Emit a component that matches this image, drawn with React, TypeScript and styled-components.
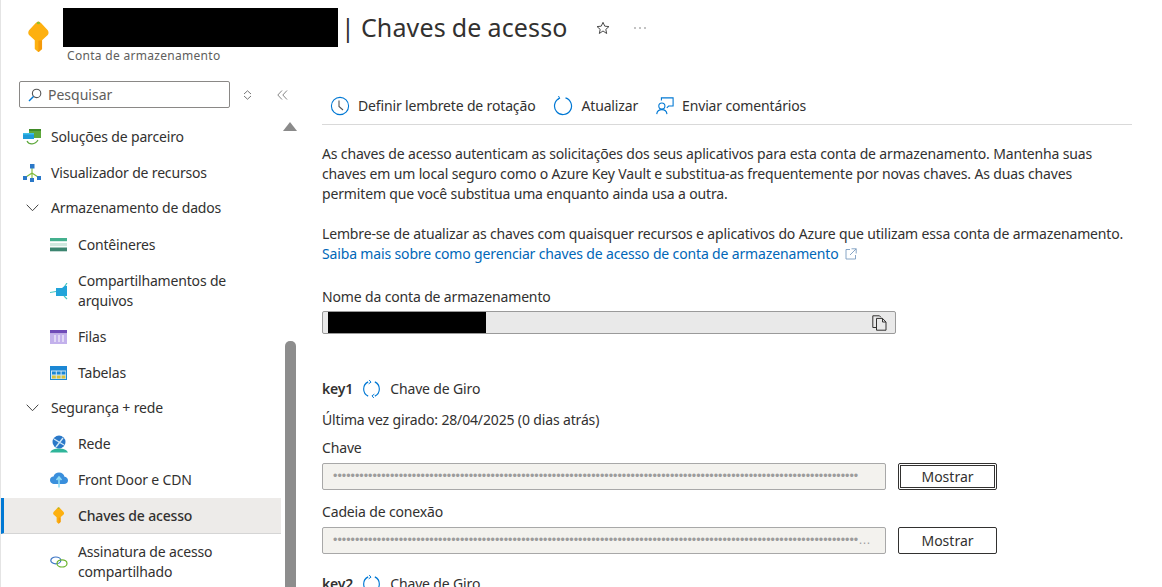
import React from "react";
import styled, { createGlobalStyle } from "styled-components";

const Global = createGlobalStyle`
  html, body { margin: 0; padding: 0; background: #fff; }
  body { font-family: "Noto Sans", "Open Sans", "Liberation Sans", sans-serif; color: #323130; }
  * { box-sizing: border-box; }
`;

const Page = styled.div`
  width: 1162px; height: 587px; overflow: hidden; display: flex; flex-direction: column;
  border-left: 1px solid #e4e4e4; position: relative;
`;
const Header = styled.header`
  height: 81px; display: flex; flex: none;
`;
const HeaderIcon = styled.div`
  width: 62px; padding: 21px 0 0 27px; flex: none;
`;
const TitleBlock = styled.div`
  padding-top: 8px; display: flex; flex-direction: column;
`;
const TitleRow = styled.div`
  display: flex; align-items: center; height: 39px;
`;
const Redacted = styled.div<{ $w: number; $h: number }>`
  width: ${p => p.$w}px; height: ${p => p.$h}px; background: #000; flex: none;
`;
const Title = styled.h1`
  margin: 0 0 2px 3px; font-size: 25px; font-weight: 400; letter-spacing: 0.15px; word-spacing: -0.7px; white-space: nowrap; color: #323130;
`;
const TitleActions = styled.div`
  display: flex; align-items: center; gap: 23px; margin-left: 28px; color: #555;
`;
const Subtitle = styled.div`
  font-size: 12px; color: #605e5c; margin: 0 0 0 4px; letter-spacing: 0.3px;
`;
const Body = styled.div`
  flex: 1; display: flex; min-height: 0;
`;
const Sidebar = styled.aside`
  width: 321px; flex: none; display: flex; flex-direction: column; position: relative; overflow: hidden;
`;
const SearchRow = styled.div`
  display: flex; align-items: center; padding-left: 18px; height: 27px; flex: none;
`;
const SearchBox = styled.div`
  width: 211px; height: 27px; border: 1px solid #8a8886; border-radius: 2px; display: flex; align-items: center;
  padding-left: 8px; gap: 6px; font-size: 14px; color: #605e5c;
`;
const SearchTools = styled.div`
  display: flex; align-items: center; gap: 25px; margin-left: 13px; color: #777;
`;
const Nav = styled.nav`
  width: 280px; margin-top: 11px; display: flex; flex-direction: column;
`;
const NavItem = styled.div<{ $level: number; $selected?: boolean; $tall?: boolean; $short?: boolean }>`
  display: flex; align-items: center; flex: none; height: ${p => (p.$tall ? 56 : p.$short ? 35 : 36)}px;
  padding-left: ${p => (p.$level === 2 ? 49 : 22)}px;
  font-size: 14px; line-height: 20px; letter-spacing: -0.17px; color: #323130;
  background: ${p => (p.$selected ? "#edebe9" : "transparent")};
  border-left: ${p => (p.$selected ? "3px solid #0078d4" : "0 solid transparent")};
  ${p => p.$level === 1 && "padding-bottom: 2px;"}
  ${p => p.$selected && "padding-left: 46px; font-weight: 500; border-bottom: 1px solid #d5d5d5;"}
`;
const NavIcon = styled.span`
  width: 18px; height: 18px; flex: none; margin-right: 10px; display: flex; align-items: center; justify-content: center;
`;
const Chevron = styled.span`
  width: 18px; flex: none; margin-right: 10px; display: flex; justify-content: center;
`;
const ScrollThumb = styled.div`
  position: absolute; left: 284px; top: 260px; width: 11px; height: 260px; border-radius: 5px 5px 0 0; background: #8d8d8d;
`;
const ScrollArrow = styled.div`
  position: absolute; left: 282px; top: 41px; width: 0; height: 0;
  border-left: 7px solid transparent; border-right: 7px solid transparent; border-bottom: 9px solid #8a8a8a;
`;
const Main = styled.main`
  width: 810px; flex: none; display: flex; flex-direction: column; font-size: 14px; line-height: 20px; letter-spacing: -0.15px;
`;
const Toolbar = styled.div`
  height: 44px; flex: none; display: flex; align-items: center; padding: 6px 0 0 8px; gap: 18px; border-bottom: 1px solid #d9d9d9;
`;
const ToolButton = styled.div`
  display: flex; align-items: center; gap: 8px; white-space: nowrap; color: #323130;
`;
const Paragraph = styled.p<{ $top: number }>`
  margin: ${p => p.$top}px 0 0; width: 810px; color: #323130;
`;
const Link = styled.a`
  color: #0067b8; text-decoration: none; display: inline-flex; align-items: center; gap: 6px;
`;
const FieldLabel = styled.div`
  color: #323130; height: 20px;
`;
const AccountLabel = styled(FieldLabel)`
  margin-top: 23px;
`;
const AccountBox = styled.div`
  width: 574px; height: 28px; margin-top: 4px; background: #e9e9e9; border: 1px solid #9a9a9a; border-radius: 2px;
  display: flex; align-items: center; justify-content: space-between; padding: 0 8px 0 5px;
`;
const KeyHead = styled.div<{ $top: number }>`
  display: flex; align-items: center; height: 20px; margin-top: ${p => p.$top}px; gap: 9px; white-space: nowrap;
  & > b { font-weight: 600; }
`;
const Rotated = styled.div`
  margin-top: 11px; height: 20px;
`;
const Label = styled(FieldLabel)<{ $top: number }>`
  margin-top: ${p => p.$top}px;
`;
const SecretRow = styled.div`
  display: flex; align-items: center; gap: 12px; margin-top: 5px;
`;
const SecretBox = styled.div`
  width: 564px; height: 27px; background: #f3f2ee; border: 1px solid #a8a8a8; border-radius: 2px; padding: 0 11px 0 10px;
  line-height: 25px;
  font-family: "Liberation Sans", sans-serif; font-size: 12.5px; letter-spacing: 0; color: #9c9c9c;
  overflow: hidden; white-space: nowrap; text-overflow: ellipsis;
`;
const ShowButton = styled.button<{ $focus?: boolean }>`
  width: 99px; height: 27px; background: #fff; border: 1px solid #323130; border-radius: 2px;
  font: inherit; font-size: 14px; letter-spacing: 0; color: #323130; padding: 0;
  ${p => p.$focus && "outline: 1px solid #323130; outline-offset: -3px;"}
`;

const KeyIcon = ({ size = 26 }: { size?: number }) => (
  <svg width={size * 0.8} height={size * 1.2} viewBox="0 0 20 30">
    <path d="M10 .5 C11 .5 12 1.5 13 2.5 L19 9 C20 10.5 20 12 19 13.5 L13.5 18.5 V27 L10 30 L6.5 27 V18.5 L1 13.5 C0 12 0 10.5 1 9 L7 2.5 C8 1.5 9 .5 10 .5 Z" fill="#fdb010" />
    <ellipse cx="10" cy="2" rx="1.6" ry="1.2" fill="#8fbf30" />
    <path d="M13.5 18.5 V27 L10 30 V19 Z" fill="#f59a0a" />
  </svg>
);
const Star = () => (
  <svg width="14" height="14" viewBox="0 0 16 16" fill="none" stroke="#444" strokeWidth="1.1"><path d="M8 1.5l2 4.4 4.8.5-3.6 3.2 1 4.7L8 11.4l-4.2 2.9 1-4.7L1.2 6.4 6 5.9z" /></svg>
);
const More = () => (
  <svg width="14" height="4" viewBox="0 0 14 4" fill="#777"><circle cx="2" cy="2" r=".8" /><circle cx="7" cy="2" r=".8" /><circle cx="12" cy="2" r=".8" /></svg>
);
const SearchIcon = () => (
  <svg width="14" height="14" viewBox="0 0 14 14" fill="none" strokeWidth="1.1"><circle cx="8.6" cy="5.4" r="4.2" stroke="#555" /><path d="M5.5 8.5 L1 13" stroke="#0078d4" strokeWidth="1.4" /></svg>
);
const Updown = () => (
  <svg width="9" height="10" viewBox="0 0 9 10" fill="none" stroke="#666" strokeWidth=".9"><path d="M1 4 L4.5 .8 L8 4" /><path d="M1 6 L4.5 9.2 L8 6" /></svg>
);
const Collapse = () => (
  <svg width="11" height="10" viewBox="0 0 11 10" fill="none" stroke="#777" strokeWidth=".9"><path d="M5 .5 L.8 5 L5 9.5" /><path d="M10 .5 L5.8 5 L10 9.5" /></svg>
);
const ChevronDown = () => (
  <svg width="13" height="8" viewBox="0 0 13 8" fill="none" stroke="#444" strokeWidth="1"><path d="M.7 .7 L6.5 6.7 L12.3 .7" /></svg>
);
const Partner = () => (
  <svg width="18" height="17" viewBox="0 0 18 17">
    <rect x="6" y="0" width="12" height="9" fill="#5ea83b" /><rect x="6" y="0" width="12" height="2" fill="#3f8a27" />
    <rect x="0" y="4" width="11" height="6" fill="#1f9bd8" /><rect x="0" y="4" width="11" height="1.5" fill="#3fc0e8" />
    <path d="M4 12 C6 16 12 16 15 11" stroke="#5ea83b" strokeWidth="1.2" fill="none" />
  </svg>
);
const Explorer = () => (
  <svg width="18" height="18" viewBox="0 0 18 18">
    <path d="M9 4 V9 M9 9 L3 13 M9 9 L15 13 M9 9 V15" stroke="#7fba3a" strokeWidth="1.1" fill="none" />
    <rect x="7" y="0" width="4.5" height="4.5" fill="#2a78c8" /><rect x="0" y="12" width="4" height="4" fill="#2a78c8" />
    <rect x="14" y="12" width="4" height="4" fill="#2a78c8" /><rect x="7" y="14" width="4" height="4" fill="#2a78c8" />
  </svg>
);
const Containers = () => (
  <svg width="18" height="14" viewBox="0 0 18 14">
    <rect y="0" width="17" height="3.2" fill="#44b08e" /><rect y="5" width="17" height="3.2" fill="#cfe8df" />
    <rect y="9.5" width="17" height="3.8" fill="#3c8570" />
  </svg>
);
const Shares = () => (
  <svg width="18" height="17" viewBox="0 0 18 17">
    <path d="M6 5 L12 5 L15 2.5 L17 3 L17 13 L6 13 Z" fill="#21a4da" />
    <path d="M0 9.5 L6 8.5 M15 3 L17 0 M14 13 L17 16" stroke="#42c6c2" strokeWidth="1.2" />
  </svg>
);
const Queues = () => (
  <svg width="18" height="14" viewBox="0 0 18 14">
    <rect width="17" height="3.5" fill="#6f4bb8" /><rect y="3.5" width="17" height="10.5" fill="#c3b1ec" />
    <path d="M5 5 V12 M9 5 V12 M13 5 V12" stroke="#fff" strokeWidth="1" />
  </svg>
);
const Tables = () => (
  <svg width="18" height="15" viewBox="0 0 18 15">
    <rect width="17" height="14" fill="#1b87d4" /><rect x="1" y="4.5" width="15" height="8.5" fill="#cfe7f7" />
    <rect x="2" y="5.5" width="3.8" height="3" fill="#1b87d4" /><rect x="6.8" y="5.5" width="3.8" height="3" fill="#1b87d4" /><rect x="11.6" y="5.5" width="3.8" height="3" fill="#1b87d4" />
    <rect x="2" y="9.5" width="3.8" height="3" fill="#d8c23a" /><rect x="6.8" y="9.5" width="3.8" height="3" fill="#d8c23a" /><rect x="11.6" y="9.5" width="3.8" height="3" fill="#d8c23a" />
  </svg>
);
const Network = () => (
  <svg width="18" height="18" viewBox="0 0 18 18">
    <path d="M0 17.5 C2 12 16 12 18 17.5 Z" fill="#2fb59a" />
    <circle cx="9" cy="7" r="6.5" fill="#2a78c8" />
    <path d="M4 4 L14 10 M13 3 L6 12" stroke="#cfe7f7" strokeWidth="1.4" />
  </svg>
);
const Cloud = () => (
  <svg width="18" height="16" viewBox="0 0 18 16">
    <path d="M5 12 C1.5 12 0 10 0 8 C0 6 1.5 4.6 3.5 4.6 C4.2 2 6.5 .5 9 .5 C12 .5 14 2.4 14.5 4.8 C16.5 5 18 6.4 18 8.4 C18 10.4 16.4 12 14 12 Z" fill="#3a8fdc" />
    <path d="M9 5 V15.5 M6.5 8 L9 5 L11.5 8" stroke="#8fdcf5" strokeWidth="1.6" fill="none" />
  </svg>
);
const Sas = () => (
  <svg width="18" height="12" viewBox="0 0 18 12" fill="none" strokeWidth="1.2">
    <ellipse cx="5.8" cy="4.4" rx="5" ry="3.4" stroke="#3b74c4" />
    <ellipse cx="12" cy="7.4" rx="5" ry="3.6" stroke="#6ab42d" />
  </svg>
);
const Clock = () => (
  <svg width="20" height="20" viewBox="0 0 20 20" fill="none" stroke="#0078d4" strokeWidth="1.1"><circle cx="10" cy="10" r="8.6" /><path d="M9 4.5 V10.5 L13 14" stroke="#555" /></svg>
);
const Refresh = () => (
  <svg width="20" height="20" viewBox="0 0 20 20" fill="none" stroke="#0078d4" strokeWidth="1.2">
    <path d="M6.5 2.3 A8.5 8.5 0 1 0 12.5 1.9" />
    <path d="M5.5 0 L6.7 2.4 L4 3.8" strokeWidth="1" />
  </svg>
);
const Rotate = () => (
  <svg width="19" height="20" viewBox="0 0 20 20" fill="none" stroke="#0078d4" strokeWidth="1.2">
    <path d="M6.5 2.5 A8.3 8.3 0 0 0 6.5 17.5" /><path d="M13.5 2.5 A8.3 8.3 0 0 1 13.5 17.5" />
    <path d="M7.5 .5 L9.5 2.8 L7 4.6" strokeWidth="1" /><path d="M12.5 19.5 L10.5 17.2 L13 15.4" strokeWidth="1" />
  </svg>
);
const Feedback = () => (
  <svg width="18" height="18" viewBox="0 0 20 20" fill="none" strokeWidth="1.2">
    <path d="M6 4 V1 H19 V10 H14 L12 12" stroke="#0078d4" />
    <circle cx="6.5" cy="10" r="3.4" stroke="#0078d4" />
    <path d="M.8 19 C1.2 15.5 3.5 14 6.5 14 C9.5 14 11.8 15.5 12.2 19" stroke="#0078d4" />
  </svg>
);
const External = () => (
  <svg width="12" height="12" viewBox="0 0 12 12" fill="none" stroke="#7a9cc0" strokeWidth=".9"><path d="M5 1.5 H1 V11 H10.5 V7" /><path d="M6.5 .8 H11.2 V5.5 M11.2 .8 L5 7" /></svg>
);
const Copy = () => (
  <svg width="15" height="16" viewBox="0 0 15 16" fill="none" stroke="#323130" strokeWidth="1"><path d="M4.5 12.5 H.8 V.8 H7.5 L9 2.4" /><path d="M4.5 3.4 H10.5 L14 7 V15.2 H4.5 Z" /><path d="M10.5 3.4 V7 H14" /></svg>
);

const Item = ({ icon, tall, selected, children }: { icon: React.ReactNode; tall?: boolean; selected?: boolean; children: React.ReactNode }) => (
  <NavItem $level={2} $tall={tall} $selected={selected}>
    <NavIcon>{icon}</NavIcon>
    <span>{children}</span>
  </NavItem>
);

export default function App() {
  return (
    <Page>
      <Global />
      <Header>
        <HeaderIcon><KeyIcon /></HeaderIcon>
        <TitleBlock>
          <TitleRow>
            <Redacted $w={275} $h={39} />
            <Title>| Chaves de acesso</Title>
            <TitleActions><Star /><More /></TitleActions>
          </TitleRow>
          <Subtitle>Conta de armazenamento</Subtitle>
        </TitleBlock>
      </Header>
      <Body>
        <Sidebar>
          <SearchRow>
            <SearchBox><SearchIcon /><span>Pesquisar</span></SearchBox>
            <SearchTools><Updown /><Collapse /></SearchTools>
          </SearchRow>
          <ScrollArrow />
          <ScrollThumb />
          <Nav>
            <NavItem $level={0}><NavIcon><Partner /></NavIcon>Soluções de parceiro</NavItem>
            <NavItem $level={0}><NavIcon><Explorer /></NavIcon>Visualizador de recursos</NavItem>
            <NavItem $level={1}><Chevron><ChevronDown /></Chevron>Armazenamento de dados</NavItem>
            <Item icon={<Containers />}>Contêineres</Item>
            <Item icon={<Shares />} tall>Compartilhamentos de<br />arquivos</Item>
            <Item icon={<Queues />}>Filas</Item>
            <Item icon={<Tables />}>Tabelas</Item>
            <NavItem $level={1} $short><Chevron><ChevronDown /></Chevron>Segurança + rede</NavItem>
            <Item icon={<Network />}>Rede</Item>
            <Item icon={<Cloud />}>Front Door e CDN</Item>
            <Item icon={<KeyIcon size={14} />} selected>Chaves de acesso</Item>
            <Item icon={<Sas />} tall>Assinatura de acesso<br />compartilhado</Item>
          </Nav>
        </Sidebar>
        <Main>
          <Toolbar>
            <ToolButton><Clock />Definir lembrete de rotação</ToolButton>
            <ToolButton><Refresh />Atualizar</ToolButton>
            <ToolButton><Feedback />Enviar comentários</ToolButton>
          </Toolbar>
          <Paragraph $top={19}>
            As chaves de acesso autenticam as solicitações dos seus aplicativos para esta conta de armazenamento. Mantenha suas<br />
            chaves em um local seguro como o Azure Key Vault e substitua-as frequentemente por novas chaves. As duas chaves<br />
            permitem que você substitua uma enquanto ainda usa a outra.
          </Paragraph>
          <Paragraph $top={20}>
            Lembre-se de atualizar as chaves com quaisquer recursos e aplicativos do Azure que utilizam essa conta de armazenamento.<br />
            <Link>Saiba mais sobre como gerenciar chaves de acesso de conta de armazenamento <External /></Link>
          </Paragraph>
          <AccountLabel>Nome da conta de armazenamento</AccountLabel>
          <AccountBox><Redacted $w={158} $h={21} /><Copy /></AccountBox>
          <KeyHead $top={45}><b>key1</b><Rotate />Chave de Giro</KeyHead>
          <Rotated>Última vez girado: 28/04/2025 (0 dias atrás)</Rotated>
          <Label $top={8}>Chave</Label>
          <SecretRow>
            <SecretBox>{"•".repeat(120)}</SecretBox>
            <ShowButton $focus>Mostrar</ShowButton>
          </SecretRow>
          <Label $top={12}>Cadeia de conexão</Label>
          <SecretRow>
            <SecretBox>{"•".repeat(126)}</SecretBox>
            <ShowButton>Mostrar</ShowButton>
          </SecretRow>
          <KeyHead $top={20}><b>key2</b><Rotate />Chave de Giro</KeyHead>
        </Main>
      </Body>
    </Page>
  );
}
